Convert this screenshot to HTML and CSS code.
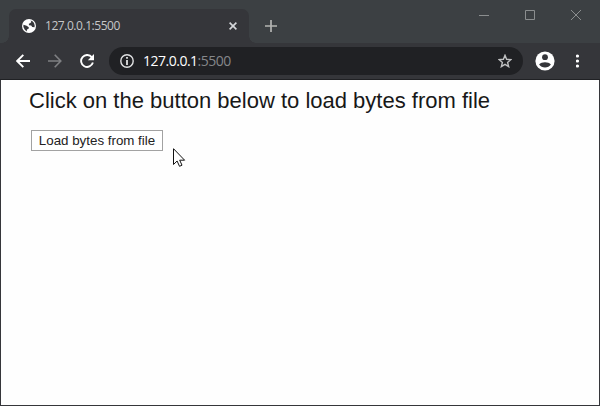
FILE: index.html
```html
<!DOCTYPE html>
<html lang="en">
<head>
<meta charset="utf-8">
<title>127.0.0.1:5500</title>
<link rel="stylesheet" href="styles.css">
</head>
<body>
<div class="window">
  <header class="tabstrip">
    <div class="tab">
      <svg class="globe" width="14" height="14" viewBox="0 0 14 14"><circle cx="7" cy="7" r="7" fill="#fff"/><path d="M1.400 5.800L4.600 6.800 6.800 8.300 6.600 9.800 5 10.600 4.700 12.500 2.800 10.800 1.400 8zM8.500 1.500L9.400 3 8 4.200 6.800 4.800 7 6.300 9.200 6.500 10.200 8 12.500 8.200 12.700 6.500 12 4 10.500 2.300z" fill="#35363a"/></svg>
      <span class="tab-title">127.0.0.1:5500</span>
      <svg class="tab-close" width="8" height="8" viewBox="0 0 8 8"><path d="M.6.6l6.800 6.800M7.400.6L.6 7.400" stroke="#d5d7da" stroke-width="1.6"/></svg>
    </div>
    <svg class="new-tab" width="12" height="12" viewBox="0 0 12 12"><path d="M6 0v12M0 6h12" stroke="#b4b5b3" stroke-width="1.700"/></svg>
    <div class="controls">
      <svg width="10" height="10" viewBox="0 0 10 10"><path d="M0 5.500h10"/></svg>
      <svg width="10" height="10" viewBox="0 0 10 10"><path d="M.5.5h9v9h-9z"/></svg>
      <svg width="10" height="10" viewBox="0 0 10 10"><path d="M0 0l10 10M10 0L0 10"/></svg>
    </div>
  </header>
  <nav class="toolbar">
    <svg width="14" height="14" viewBox="0 0 14 14"><path d="M14 7H1.500M7.300.8L1.200 7l6.100 6.200" fill="none" stroke="#fff" stroke-width="1.900"/></svg>
    <svg width="14" height="14" viewBox="0 0 14 14"><path d="M0 7h12.500M6.700.8L12.800 7l-6.100 6.200" fill="none" stroke="#7f8083" stroke-width="1.600"/></svg>
    <svg width="14" height="14" viewBox="0 0 14 14"><path d="M11.900 3.300A6 6 0 1 0 12.900 8.600" fill="none" stroke="#fff" stroke-width="1.900"/><path d="M14 0v6.200H7.800z" fill="#fff"/></svg>
    <div class="address">
      <svg width="14" height="14" viewBox="0 0 14 14"><circle cx="7" cy="7" r="6.200" fill="none" stroke="#e0e1e2" stroke-width="1.400"/><path d="M7 3v1.700M7 6v5" stroke="#e0e1e2" stroke-width="1.800"/></svg>
      <span class="url">127.0.0.1<span class="port">:5500</span></span>
      <svg class="star" width="14" height="14" viewBox="0 0 14 14"><path d="M7 1.300l1.600 4 4.300.3-3.300 2.800 1.050 4.200L7 10.300l-3.650 2.300 1.050-4.200L1.100 5.600l4.300-.3z" fill="none" stroke="#bfc0c1" stroke-width="1.400"/></svg>
    </div>
    <svg class="profile" width="20" height="20" viewBox="0 0 20 20"><circle cx="10" cy="10" r="9.600" fill="#fff"/><circle cx="10" cy="6.200" r="2.900" fill="#35363a"/><path d="M4.100 13.600c1.200-1.700 3.600-2.400 5.900-2.400s4.700.7 5.900 2.400c-1.300 1.900-3.500 3-5.900 3s-4.600-1.100-5.900-3z" fill="#35363a"/></svg>
    <svg class="menu" width="4" height="14" viewBox="0 0 4 14" fill="#fff"><circle cx="1.500" cy="2" r="1.600"/><circle cx="1.500" cy="7" r="1.600"/><circle cx="1.500" cy="12" r="1.600"/></svg>
  </nav>
  <main class="page">
    <h1>Click on the button below to load bytes from file</h1>
    <button type="button">Load bytes from file</button>
  </main>
  <svg class="cursor" width="13" height="20" viewBox="0 0 13 20"><path d="M.5.7v15.800l3.600-3.500 2.400 5.300 2.500-1.100-2.300-5h4.900z" fill="#fff" stroke="#111" stroke-width="1"/></svg>
</div>
</body>
</html>
```

FILE: styles.css
```css
* { box-sizing: border-box; }
body { margin: 0; }
svg { display: block; flex: none; }
.window {
  position: relative;
  display: flex;
  flex-direction: column;
  width: 600px;
  height: 406px;
  overflow: hidden;
  background: #fff;
}
.tabstrip {
  display: flex;
  flex: none;
  height: 43px;
  padding-left: 9px;
  background: #3c4043;
}
.tab {
  position: relative;
  display: flex;
  align-items: center;
  width: 240px;
  height: 34px;
  margin-top: 9px;
  padding: 0 12px 0 13px;
  border-radius: 7px 7px 0 0;
  background: #35363a;
}
.tab::before, .tab::after {
  content: "";
  position: absolute;
  bottom: 0;
  width: 7px;
  height: 7px;
}
.tab::before { left: -7px; background: radial-gradient(circle at 0 0, transparent 6.5px, #35363a 7px); }
.tab::after { right: -7px; background: radial-gradient(circle at 100% 0, transparent 6.5px, #35363a 7px); }
.tab-title {
  margin-left: 9px;
  font: 12px/16px "Open Sans", sans-serif;
  letter-spacing: -0.45px;
  color: #c6c7c8;
}
.tab-close { margin-left: auto; }
.new-tab { margin: 20px 0 0 16px; }
.controls {
  display: flex;
  gap: 36px;
  margin: 10px 19px 0 auto;
  fill: none;
  stroke: #8b8e8f;
}
.toolbar {
  display: flex;
  flex: none;
  align-items: center;
  gap: 18px;
  height: 37px;
  padding: 0 20px 1px 16px;
  border-bottom: 1px solid #202124;
  background: #35363a;
}
.address {
  display: flex;
  flex: 1;
  align-items: center;
  height: 28px;
  margin-left: -3px;
  padding: 0 11px;
  border-radius: 14px;
  background: #202124;
}
.url {
  margin-left: 9px;
  font: 14px/18px "Open Sans", sans-serif;
  letter-spacing: -0.5px;
  color: #fff;
}
.port { color: #85878a; }
.star { margin-left: auto; }
.profile { margin: 0 3px 0 -6px; }
.page {
  flex: 1;
  padding: 6px 28px;
  border: solid #35363a;
  border-width: 0 1px 1px;
  background: #fefefe;
  font-family: "Liberation Sans", Arial, sans-serif;
}
h1 {
  margin: 0;
  font-size: 22px;
  font-weight: 400;
  line-height: 30px;
  white-space: nowrap;
  color: #181818;
}
button {
  display: block;
  width: 132px;
  height: 21px;
  margin: 14px 0 0 2px;
  padding: 0;
  border: 1px solid #a2a2a2;
  background: #fff;
  font: 13.333px/19px "Liberation Sans", Arial, sans-serif;
  color: #222;
  white-space: nowrap;
}
.cursor {
  position: absolute;
  left: 173px;
  top: 148px;
}
```
